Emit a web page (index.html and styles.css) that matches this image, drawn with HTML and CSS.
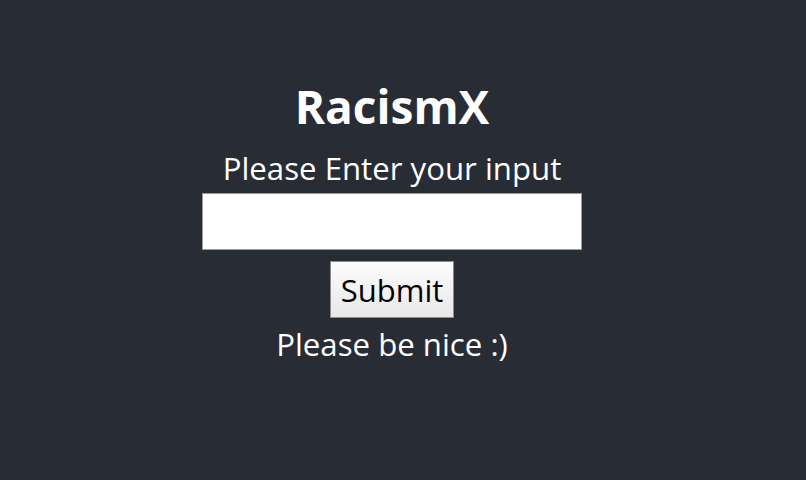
FILE: index.html
```html
<!DOCTYPE html>
<html lang="en">
<head>
  <meta charset="UTF-8">
  <meta name="viewport" content="width=device-width, initial-scale=1.0">
  <title>RacismX</title>
  <link rel="stylesheet" href="styles.css">
</head>
<body>

  <div class="app">
    <h1 class="title">RacismX</h1>

    <form class="form" onsubmit="return false">
      <label for="userInput">Please Enter your input</label>
      <input type="text" id="userInput">
      <button type="submit">Submit</button>
    </form>

    <p class="note">Please be nice :)</p>
  </div>

</body>
</html>
```

FILE: styles.css
```css
body {
  margin: 0;
  background-color: #282c34;
  font-family: "Open Sans", "Noto Sans", sans-serif;
  color: white;
}

.app {
  display: flex;
  flex-direction: column;
  align-items: center;
  padding: 81px 22px 0 0;
}

.title {
  margin: 0;
  font-size: 46px;
  font-weight: 700;
  line-height: 50px;
}

.form {
  display: flex;
  flex-direction: column;
  align-items: center;
  margin-top: 19px;
}

.form label {
  font-size: 31.2px;
  line-height: 36px;
}

.form input {
  width: 380px;
  height: 57px;
  box-sizing: border-box;
  border: 1px solid #9a9a9a;
  background: white;
  margin-top: 7px;
}

.form button {
  margin-top: 11px;
  height: 57px;
  padding: 0 10px;
  font-family: inherit;
  font-size: 31px;
  color: black;
  border: 1px solid #8a8a8a;
  border-radius: 0;
  background: linear-gradient(#fcfcfc, #e8e8e8);
}

.note {
  margin: 8px 0 0;
  font-size: 31.2px;
  line-height: 36px;
}
```
